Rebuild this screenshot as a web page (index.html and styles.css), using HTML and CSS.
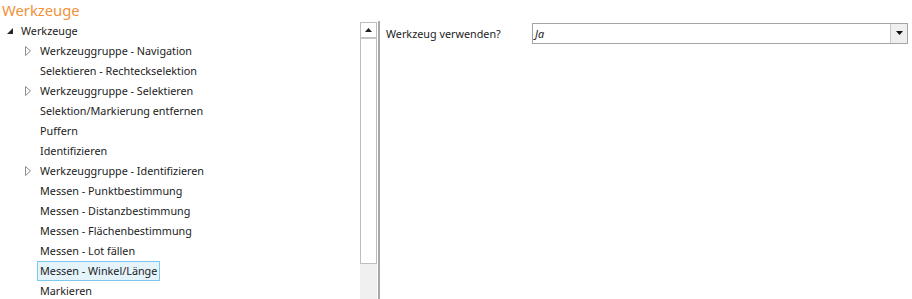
FILE: index.html
```html
<!DOCTYPE html>
<html lang="de">
<head>
    <meta charset="UTF-8">
    <title>Werkzeuge</title>
    <link rel="stylesheet" href="styles.css">
</head>
<body>
    <div class="page-title">Werkzeuge</div>

    <div class="main">
        <div class="tree-pane">
            <div class="tree">
                <div class="node root">
                    <span class="expander">
                        <svg width="6" height="6" viewBox="0 0 6 6"><polygon points="6,0 6,6 0,6" fill="#262626"/></svg>
                    </span>
                    <span class="label">Werkzeuge</span>
                </div>
                <div class="node child">
                    <span class="expander">
                        <svg width="6" height="10" viewBox="0 0 6 10"><polygon points="0.5,0.5 5.5,5 0.5,9.5" fill="none" stroke="#8c8c8c"/></svg>
                    </span>
                    <span class="label">Werkzeuggruppe - Navigation</span>
                </div>
                <div class="node child"><span class="expander"></span><span class="label">Selektieren - Rechteckselektion</span></div>
                <div class="node child">
                    <span class="expander">
                        <svg width="6" height="10" viewBox="0 0 6 10"><polygon points="0.5,0.5 5.5,5 0.5,9.5" fill="none" stroke="#8c8c8c"/></svg>
                    </span>
                    <span class="label">Werkzeuggruppe - Selektieren</span>
                </div>
                <div class="node child"><span class="expander"></span><span class="label">Selektion/Markierung entfernen</span></div>
                <div class="node child"><span class="expander"></span><span class="label">Puffern</span></div>
                <div class="node child"><span class="expander"></span><span class="label">Identifizieren</span></div>
                <div class="node child">
                    <span class="expander">
                        <svg width="6" height="10" viewBox="0 0 6 10"><polygon points="0.5,0.5 5.5,5 0.5,9.5" fill="none" stroke="#8c8c8c"/></svg>
                    </span>
                    <span class="label">Werkzeuggruppe - Identifizieren</span>
                </div>
                <div class="node child"><span class="expander"></span><span class="label">Messen - Punktbestimmung</span></div>
                <div class="node child"><span class="expander"></span><span class="label">Messen - Distanzbestimmung</span></div>
                <div class="node child"><span class="expander"></span><span class="label">Messen - Flächenbestimmung</span></div>
                <div class="node child"><span class="expander"></span><span class="label">Messen - Lot fällen</span></div>
                <div class="node child"><span class="expander"></span><span class="label selected">Messen - Winkel/Länge</span></div>
                <div class="node child"><span class="expander"></span><span class="label">Markieren</span></div>
            </div>

            <div class="scrollbar">
                <div class="scroll-btn">
                    <svg width="7" height="4" viewBox="0 0 7 4"><polygon points="3.5,0 7,4 0,4" fill="#202020"/></svg>
                </div>
                <div class="scroll-thumb"></div>
                <div class="scroll-track"></div>
            </div>
        </div>

        <div class="splitter"></div>

        <div class="props">
            <div class="prop-row">
                <span class="prop-label">Werkzeug verwenden?</span>
                <div class="combo">
                    <span class="combo-value">Ja</span>
                    <span class="combo-btn">
                        <svg width="7" height="4" viewBox="0 0 7 4"><polygon points="0,0 7,0 3.5,4" fill="#101010"/></svg>
                    </span>
                </div>
            </div>
        </div>
    </div>
</body>
</html>
```

FILE: styles.css
```css
body {
    margin: 0;
    background-color: #ffffff;
    font-family: "Noto Sans", "Open Sans", sans-serif;
    font-size: 10.8px;
    color: #1b1b1b;
    width: 912px;
    height: 299px;
    overflow: hidden;
}

.page-title {
    height: 21px;
    padding-left: 2px;
    font-size: 14.8px;
    line-height: 21px;
    color: #f0923a;
}

.main {
    display: flex;
    height: 278px;
}

/* Tree on the left */
.tree-pane {
    display: flex;
    width: 377px;
}

.tree {
    width: 360px;
    overflow: hidden;
}

.node {
    display: flex;
    align-items: center;
    height: 20px;
}

.root {
    padding-left: 7px;
}

.child {
    padding-left: 25px;
}

.expander {
    display: flex;
    align-items: center;
    height: 20px;
    flex-shrink: 0;
}

.root .expander {
    width: 11px;
}

.child .expander {
    width: 15px;
}

.label {
    white-space: nowrap;
    padding: 0 2px;
    line-height: 18px;
    border: 1px solid transparent;
}

.child .label {
    margin-left: -3px;
}

.label.selected {
    background-color: #e5f3fb;
    border-color: #7dc8ef;
}

.scrollbar {
    display: flex;
    flex-direction: column;
    width: 17px;
    padding-top: 1px;
}

.scroll-btn {
    display: flex;
    align-items: center;
    justify-content: center;
    border: 1px solid #bdbdbd;
    border-bottom: 2px solid #c4c4c4;
    box-sizing: border-box;
    height: 17px;
}

.scroll-thumb {
    height: 225px;
    border: 1px solid #bdbdbd;
    border-top: none;
    box-sizing: border-box;
    background-color: #ffffff;
}

.scroll-track {
    flex: 1;
    background-color: #f0f0f0;
}

.splitter {
    width: 2px;
    margin-left: 1px;
    background-color: #a8a8a8;
}

/* Property grid on the right */
.props {
    flex: 1;
    padding: 1px 4px 0 6px;
}

.prop-row {
    display: flex;
    align-items: center;
    height: 22px;
}

.prop-label {
    width: 146px;
    white-space: nowrap;
    padding-top: 1px;
}

.combo {
    display: flex;
    width: 376px;
    height: 21px;
    border: 1px solid #a5a5a5;
    box-sizing: border-box;
}

.combo-value {
    flex: 1;
    padding-left: 2px;
    font-style: italic;
    line-height: 19px;
}

.combo-btn {
    width: 16px;
    display: flex;
    align-items: center;
    justify-content: center;
    background-color: #efefef;
    border-left: 1px solid #c8c8c8;
}
```
